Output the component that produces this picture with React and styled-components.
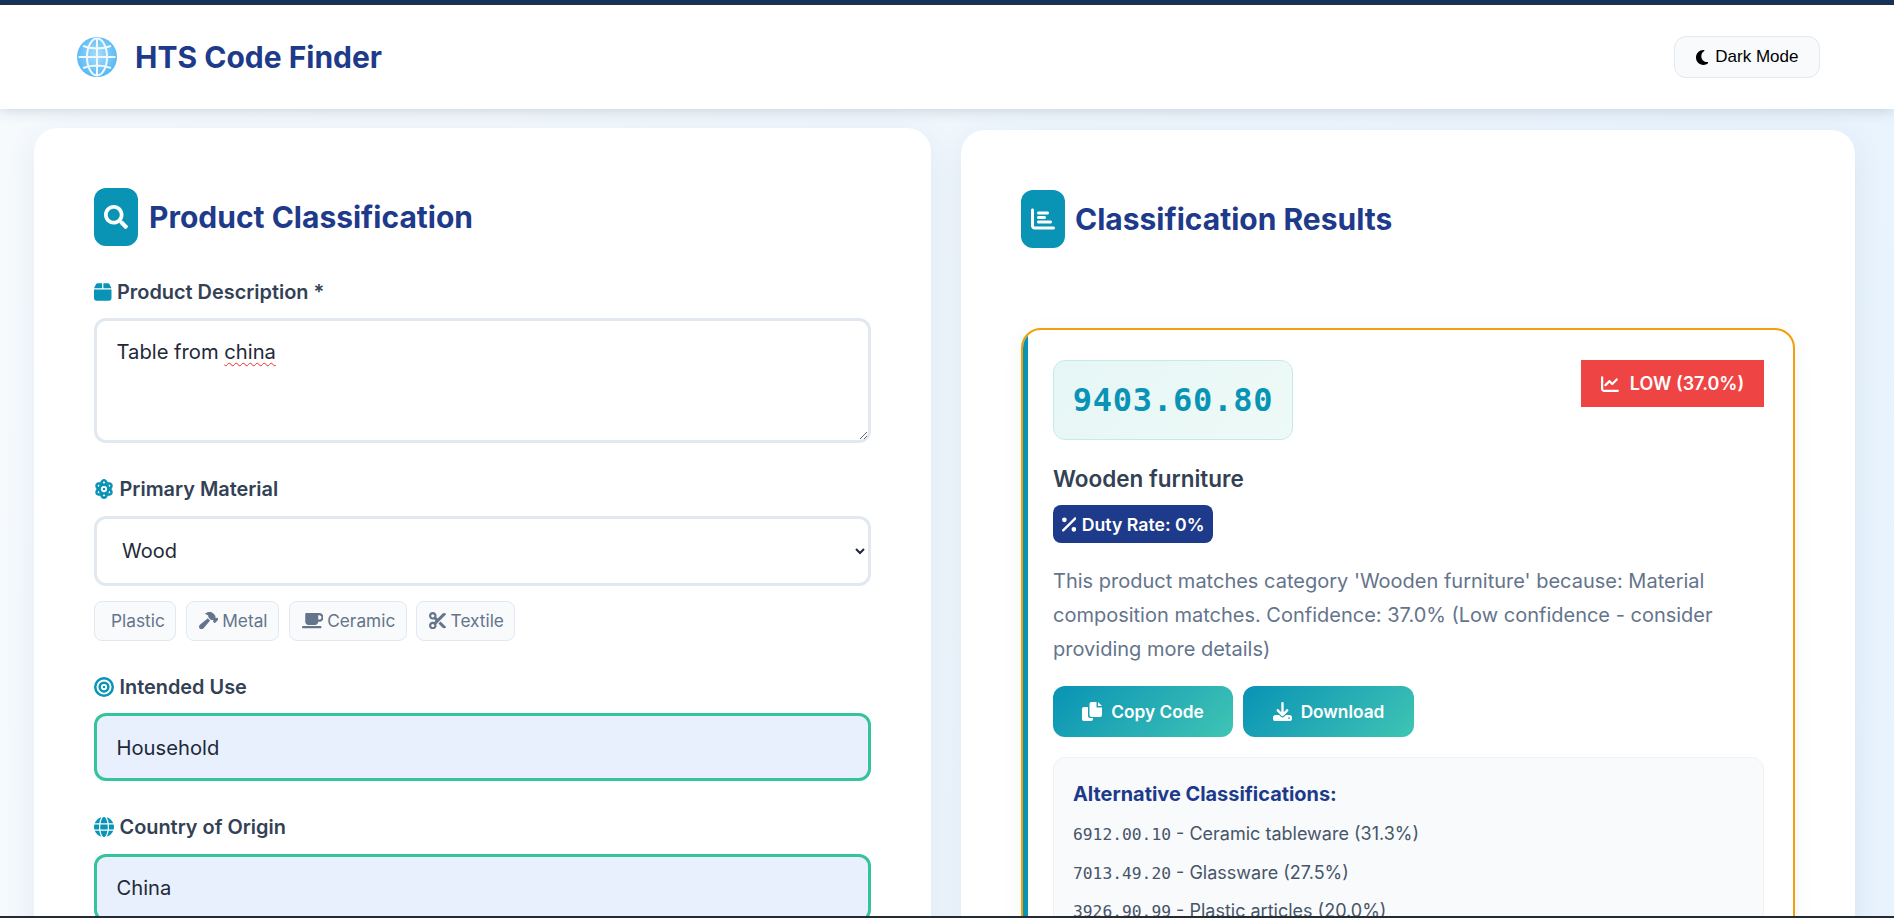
import React from "react";
import styled, { createGlobalStyle } from "styled-components";
import { FaSearch } from "react-icons/fa";
import {
  FaAtom,
  FaBox,
  FaBullseye,
  FaChartBar,
  FaChartLine,
  FaDownload,
  FaGlobe,
  FaHammer,
  FaMoon,
  FaMugSaucer,
  FaPercent,
  FaScissors,
} from "react-icons/fa6";

const GlobalStyle = createGlobalStyle`
  * {
    box-sizing: border-box;
  }
  html, body {
    margin: 0;
    padding: 0;
    height: 100%;
    overflow: hidden;
  }
  body {
    font-family: Inter, "Liberation Sans", sans-serif;
    background: #eef6fc;
  }
  /* react-icons gives every icon a 1em square, font awesome glyphs are wider or narrower */
  svg[viewBox="0 0 384 512"] {
    width: 0.75em;
  }
  svg[viewBox="0 0 448 512"] {
    width: 0.875em;
  }
  svg[viewBox="0 0 576 512"] {
    width: 1.125em;
  }
  svg[viewBox="0 0 640 512"] {
    width: 1.25em;
  }
`;

const Page = styled.div`
  height: 918px;
  display: flex;
  flex-direction: column;
  overflow: hidden;
  background: linear-gradient(100deg, #f6fafd 0%, #e8f3fd 100%);
`;

const TopStripe = styled.div`
  flex: none;
  height: 5px;
  background: linear-gradient(#12355f 0 3px, #27303b 3px);
`;

const BottomEdge = styled.div`
  flex: none;
  height: 2px;
  background: #252b33;
`;

const Header = styled.header`
  flex: none;
  height: 104px;
  padding: 0 74px 0 77px;
  display: flex;
  align-items: center;
  justify-content: space-between;
  background: #fff;
  box-shadow: 0 2px 12px rgba(30, 58, 90, 0.18);
  position: relative;
  z-index: 1;
`;

const Brand = styled.div`
  display: flex;
  align-items: center;
  gap: 18px;
`;

const BrandName = styled.h1`
  margin: 0;
  font-size: 30px;
  font-weight: 700;
  color: #1e3a8a;
`;

const ThemeButton = styled.button`
  width: 146px;
  height: 42px;
  display: flex;
  align-items: center;
  justify-content: center;
  gap: 7px;
  background: #f8fafc;
  border: 1px solid #e2e8f0;
  border-radius: 12px;
  font-family: "Liberation Sans", Arial, sans-serif;
  font-size: 17px;
  color: #000;
  svg {
    font-size: 17px;
  }
`;

const Main = styled.main`
  flex: 1;
  min-height: 0;
  overflow: hidden;
  padding: 21px 39px 0 34px;
  display: grid;
  grid-template-columns: 897px 894px;
  gap: 30px;
  align-items: start;
`;

const Card = styled.section`
  background: #fff;
  border-radius: 24px;
  padding: 60px;
  box-shadow: 0 8px 32px rgba(30, 64, 110, 0.08);
  margin-top: ${({ $lifted }) => ($lifted ? "-2px" : "0")};
`;

const CardHeading = styled.div`
  display: flex;
  align-items: center;
  gap: ${({ $iconGap }) => $iconGap};
  margin-bottom: ${({ $gap }) => $gap};
`;

const HeadingIcon = styled.div`
  width: 44px;
  height: 58px;
  display: flex;
  align-items: center;
  justify-content: center;
  border-radius: 12px;
  background: #0993b5;
  color: #fff;
  font-size: 24px;
`;

const CardTitle = styled.h2`
  margin: 0;
  font-size: 30px;
  font-weight: 700;
  color: #1e3a8a;
`;

const Field = styled.div`
  margin-bottom: 33.5px;
`;

const Label = styled.label`
  display: flex;
  align-items: center;
  gap: 5.5px;
  height: 25px;
  margin-bottom: 14px;
  font-size: 19.9px;
  font-weight: 600;
  color: #334155;
  svg {
    color: #0993b5;
    font-size: 20px;
  }
`;

/* the atom sits centred in a full em box in the reference */
const AtomIcon = styled(FaAtom)`
  && {
    width: 1em;
  }
`;

const TextBox = styled.div`
  height: 125px;
  padding: 18px 19.5px;
  border: 3px solid #e2e8f0;
  border-radius: 12px;
  background: #fff;
  overflow: auto;
  resize: vertical;
  font-size: 20.2px;
  line-height: 26px;
  color: #1f2937;
`;

const Misspelled = styled.span`
  text-decoration: underline wavy #ef2b2b 1px;
  text-underline-offset: 3px;
`;

const Select = styled.select`
  display: block;
  width: 100%;
  height: 70px;
  padding: 0 21px;
  border: 3px solid #e2e8f0;
  border-radius: 12px;
  background: #fff;
  font-family: inherit;
  font-size: 20px;
  color: #1f2937;
`;

const ChipRow = styled.div`
  display: flex;
  gap: 9.5px;
  margin-top: 15px;
`;

const Chip = styled.span`
  height: 40px;
  padding: 0 10.5px 0 12px;
  display: flex;
  align-items: center;
  gap: 4px;
  background: #f8fafc;
  border: 1px solid #e2e8f0;
  border-radius: 8px;
  font-size: 17.3px;
  color: #64748b;
`;

const TextInput = styled.input`
  display: block;
  width: 100%;
  height: 68px;
  padding: 0 19.5px;
  border: 3px solid #34c39b;
  border-radius: 12px;
  background: #e8f0fe;
  font-family: inherit;
  font-size: 20.2px;
  color: #1f2937;
  outline: none;
`;

const ResultCard = styled.article`
  position: relative;
  margin-top: 80px;
  padding: 30px 29px 30px 30px;
  border: 2px solid #f59e0b;
  border-radius: 20px;
  background: #fff;
  overflow: hidden;
  box-shadow: 0 4px 20px rgba(30, 64, 110, 0.06);
  &::before {
    content: "";
    position: absolute;
    left: 0;
    top: 0;
    bottom: 0;
    width: 5px;
    background: #0993b5;
  }
`;

const ResultTop = styled.div`
  display: flex;
  align-items: flex-start;
  justify-content: space-between;
  margin-bottom: 24px;
`;

const CodeBox = styled.div`
  width: 240px;
  height: 80px;
  display: flex;
  align-items: center;
  justify-content: center;
  background: linear-gradient(135deg, #e6f6f6, #eefaf7);
  border: 1px solid #c3ebe8;
  border-radius: 12px;
  font-family: "DejaVu Sans Mono", monospace;
  font-size: 32px;
  font-weight: 700;
  letter-spacing: 0.8px;
  color: #0993b5;
`;

const ConfidenceBadge = styled.div`
  width: 183px;
  height: 47px;
  display: flex;
  align-items: center;
  justify-content: center;
  gap: 11px;
  background: #ef4444;
  color: #fff;
  font-size: 18px;
  font-weight: 600;
`;

const ResultName = styled.h3`
  margin: 0 0 11px;
  font-size: 22.5px;
  line-height: 30px;
  font-weight: 600;
  color: #334155;
`;

const DutyBadge = styled.div`
  width: 160px;
  height: 38px;
  padding-left: 9px;
  display: flex;
  align-items: center;
  gap: 5.5px;
  background: #1e3a8a;
  border-radius: 8px;
  color: #fff;
  font-size: 17.7px;
  font-weight: 600;
  svg {
    font-size: 19px;
  }
`;

const Reason = styled.p`
  margin: 21px 0 20px;
  font-size: 20px;
  line-height: 34px;
  color: #64748b;
`;

const ActionRow = styled.div`
  display: flex;
  gap: 10px;
  margin-bottom: 20px;
`;

const ActionButton = styled.button`
  width: ${({ $width }) => $width};
  height: 51px;
  display: flex;
  align-items: center;
  justify-content: center;
  gap: 9px;
  border: 0;
  border-radius: 12px;
  background: linear-gradient(135deg, #0993b5, #40c4b4);
  color: #fff;
  font-family: inherit;
  font-size: 17.3px;
  font-weight: 600;
  svg {
    font-size: 19px;
  }
`;

const AltPanel = styled.div`
  padding: 22px 19px;
  background: #f8fafc;
  border: 1px solid #eef1f6;
  border-radius: 12px;
`;

const AltTitle = styled.h4`
  margin: 0 0 7px;
  font-size: 19.9px;
  line-height: 28px;
  font-weight: 700;
  color: #1e3a8a;
`;

const AltRow = styled.div`
  font-size: 18px;
  line-height: 38.6px;
  color: #475569;
`;

const AltCode = styled.code`
  font-family: "DejaVu Sans Mono", monospace;
  font-size: 16.3px;
  line-height: 1;
`;

const materials = ["Wood", "Plastic", "Metal", "Ceramic", "Textile"];

const chips = [
  { name: "Plastic", icon: <span /> },
  { name: "Metal", icon: <FaHammer /> },
  { name: "Ceramic", icon: <FaMugSaucer /> },
  { name: "Textile", icon: <FaScissors /> },
];

const alternatives = [
  { code: "6912.00.10", name: "Ceramic tableware", score: "31.3%" },
  { code: "7013.49.20", name: "Glassware", score: "27.5%" },
  { code: "3926.90.99", name: "Plastic articles", score: "20.0%" },
];

const GlobeLogo = () => (
  <svg width="40" height="40" viewBox="0 0 40 40" aria-hidden="true">
    <defs>
      <radialGradient id="globeFill" cx="50%" cy="45%" r="55%">
        <stop offset="0%" stopColor="#a8ddfb" />
        <stop offset="100%" stopColor="#55b7f5" />
      </radialGradient>
    </defs>
    <circle cx="20" cy="20" r="20" fill="url(#globeFill)" />
    <g fill="none" stroke="#eef9ff" strokeWidth="2">
      <ellipse cx="20" cy="20" rx="10" ry="18.5" />
      <path d="M20 1.5v37M1.5 20h37M6 9q14 5 28 0M6 31q14-5 28 0" />
    </g>
  </svg>
);

const CopyIcon = () => (
  <svg width="20" height="19" viewBox="0 0 20 19" fill="currentColor" aria-hidden="true">
    <path d="M2 5H6V14a2 2 0 0 0 2 2H11V17a2 2 0 0 1-2 2H2a2 2 0 0 1-2-2V7a2 2 0 0 1 2-2z" />
    <path d="M9.5 0H14.5V5.5H20V13a2 2 0 0 1-2 2H9.5a2 2 0 0 1-2-2V2a2 2 0 0 1 2-2z" />
    <path d="M16 0L20 4H16z" />
  </svg>
);

const App = () => {
  return (
    <Page>
      <GlobalStyle />
      <TopStripe />
      <Header>
        <Brand>
          <GlobeLogo />
          <BrandName>HTS Code Finder</BrandName>
        </Brand>
        <ThemeButton>
          <FaMoon />
          Dark Mode
        </ThemeButton>
      </Header>
      <Main>
        <Card $lifted>
          <CardHeading $iconGap="11px" $gap="33px">
            <HeadingIcon>
              <FaSearch />
            </HeadingIcon>
            <CardTitle>Product Classification</CardTitle>
          </CardHeading>
          <Field>
            <Label>
              <FaBox />
              Product Description *
            </Label>
            <TextBox>
              Table from <Misspelled>china</Misspelled>
            </TextBox>
          </Field>
          <Field>
            <Label>
              <AtomIcon />
              Primary Material
            </Label>
            <Select defaultValue="Wood">
              {materials.map((m) => (
                <option key={m}>{m}</option>
              ))}
            </Select>
            <ChipRow>
              {chips.map((c) => (
                <Chip key={c.name}>
                  {c.icon}
                  {c.name}
                </Chip>
              ))}
            </ChipRow>
          </Field>
          <Field>
            <Label>
              <FaBullseye />
              Intended Use
            </Label>
            <TextInput readOnly value="Household" />
          </Field>
          <Field>
            <Label>
              <FaGlobe />
              Country of Origin
            </Label>
            <TextInput readOnly value="China" />
          </Field>
        </Card>
        <Card>
          <CardHeading $iconGap="10px" $gap="80px">
            <HeadingIcon>
              <FaChartBar />
            </HeadingIcon>
            <CardTitle>Classification Results</CardTitle>
          </CardHeading>
          <ResultCard>
            <ResultTop>
              <CodeBox>9403.60.80</CodeBox>
              <ConfidenceBadge>
                <FaChartLine />
                LOW (37.0%)
              </ConfidenceBadge>
            </ResultTop>
            <ResultName>Wooden furniture</ResultName>
            <DutyBadge>
              <FaPercent />
              Duty Rate: 0%
            </DutyBadge>
            <Reason>
              This product matches category 'Wooden furniture' because: Material
              composition matches. Confidence: 37.0% (Low confidence - consider
              providing more details)
            </Reason>
            <ActionRow>
              <ActionButton $width="180px">
                <CopyIcon />
                Copy Code
              </ActionButton>
              <ActionButton $width="171px">
                <FaDownload />
                Download
              </ActionButton>
            </ActionRow>
            <AltPanel>
              <AltTitle>Alternative Classifications:</AltTitle>
              {alternatives.map((a) => (
                <AltRow key={a.code}>
                  <AltCode>{a.code}</AltCode> - {a.name} ({a.score})
                </AltRow>
              ))}
            </AltPanel>
          </ResultCard>
        </Card>
      </Main>
      <BottomEdge />
    </Page>
  );
};

export default App;
